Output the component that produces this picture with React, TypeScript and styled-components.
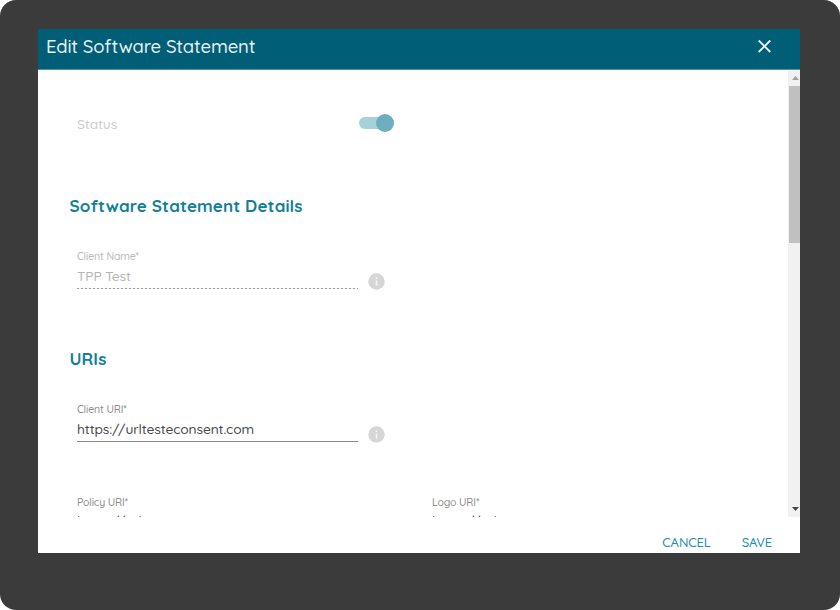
import React from "react";
import styled, { createGlobalStyle } from "styled-components";

const GlobalStyle = createGlobalStyle`
  * { box-sizing: border-box; }
  html, body { margin: 0; background: #fff; overflow: hidden; }
  body { font-family: Quicksand, Lato, "Open Sans", sans-serif; }
  button { font: inherit; border: 0; padding: 0; background: none; }
`;

const Backdrop = styled.main`
  width: 840px;
  height: 610px;
  padding: 29px 40px 57px 38px;
  border-radius: 16px;
  background: #3b3b3b;
`;

const Dialog = styled.section`
  display: flex;
  flex-direction: column;
  width: 762px;
  height: 524px;
  background: #fff;
`;

const Header = styled.header`
  display: flex;
  justify-content: space-between;
  flex: 0 0 41px;
  padding: 5px 27px 0 8px;
  background: #005e77;
  border-bottom: 1px solid #5292a2;
`;

const Title = styled.h1`
  margin: 0;
  color: #e7f0f2;
  font-size: 18.5px;
  line-height: 24px;
  font-weight: 500;
  letter-spacing: -0.18px;
  white-space: nowrap;
`;

const CloseButton = styled.button`
  display: flex;
  width: 17px;
  height: 17px;
  margin-top: 4px;
`;

const Viewport = styled.div`
  display: flex;
  flex: 0 0 447px;
  overflow: hidden;
`;

const Form = styled.div`
  flex: 1;
  min-width: 0;
  height: 447px;
  padding: 44px 0 0 31.5px;
  overflow: hidden;
`;

const StatusRow = styled.div`
  display: flex;
  justify-content: space-between;
  width: 324px;
  height: 82px;
  padding-left: 7.5px;
`;

const StatusLabel = styled.span`
  color: #cbcbcb;
  font-size: 13.8px;
  line-height: 20px;
  letter-spacing: -0.14px;
  font-weight: 500;
`;

const Toggle = styled.span`
  display: flex;
  align-items: center;
  justify-content: flex-end;
  width: 35px;
  height: 12px;
  margin-top: 3px;
  border-radius: 6px;
  background: #a8d0d9;
`;

const Knob = styled.span`
  flex: 0 0 18px;
  height: 18px;
  border-radius: 50%;
  background: #6dafbf;
`;

const SectionTitle = styled.h2`
  height: 20px;
  margin: 0 0 33px;
  color: #127f99;
  font-size: 17px;
  line-height: 20px;
  font-weight: 700;
  letter-spacing: 0.1px;
`;

const FieldRow = styled.div<{ $gap: number }>`
  display: flex;
  height: 40px;
  margin-bottom: ${(p) => p.$gap}px;
  padding-left: 7.5px;
`;

const Field = styled.label<{ $disabled?: boolean }>`
  display: flex;
  flex-direction: column;
  flex: 0 0 281px;
  height: 40px;
  background: ${(p) =>
    p.$disabled
      ? "repeating-linear-gradient(90deg, #a0a0a0 0 2.4px, #f0f0f0 2.4px 4px) bottom / 100% 1px no-repeat"
      : "linear-gradient(#898989, #898989) bottom / 100% 1px no-repeat"};
  color: ${(p) => (p.$disabled ? "#b4b4b4" : "#484848")};
`;

const FieldLabel = styled.span<{ $disabled?: boolean }>`
  height: 14px;
  color: ${(p) => (p.$disabled ? "#b8b8b8" : "#8c8c8c")};
  font-size: 10.5px;
  line-height: 14px;
  font-weight: 500;
  letter-spacing: -0.15px;
`;

const FieldValue = styled.span<{ $offset: number }>`
  height: 20px;
  margin-top: ${(p) => p.$offset}px;
  font-size: 13.8px;
  line-height: 20px;
  font-weight: 500;
  letter-spacing: -0.14px;
`;

const InfoMark = styled.svg`
  width: 17px;
  height: 17px;
  margin: 24px 0 0 9.5px;
`;

const SplitRow = styled.div`
  display: grid;
  grid-template-columns: 281px 281px;
  column-gap: 74px;
  padding-left: 7.5px;
`;

const Scrollbar = styled.div`
  display: flex;
  flex-direction: column;
  justify-content: space-between;
  flex: 0 0 12px;
  height: 447px;
  background: #f1f1f1;
`;

const Arrow = styled.svg`
  width: 7px;
  height: 4px;
  margin: 6px 0 6px 4px;
`;

const Thumb = styled.div`
  flex: 0 0 157px;
  margin: 0 0 auto 1px;
  background: #c0c0c0;
`;

const Footer = styled.footer`
  display: flex;
  justify-content: flex-end;
  gap: 31px;
  flex: 1;
  padding: 16px 28px 0 0;
`;

const Action = styled.button`
  height: 18px;
  color: #228fa9;
  font-size: 13px;
  line-height: 18px;
  font-weight: 500;
  letter-spacing: -0.12px;
`;

const Info = () => (
  <InfoMark viewBox="0 0 17 17">
    <circle cx="8.5" cy="8.5" r="8.2" fill="#d6d6d7" />
    <path d="M8.5 4.2v1.8M8.5 7.4v5.1" stroke="#f6f6f6" strokeWidth="1.6" />
  </InfoMark>
);

type TextFieldProps = { label: string; value: string; disabled?: boolean; offset?: number };

const TextField = ({ label, value, disabled, offset = 3 }: TextFieldProps) => (
  <Field $disabled={disabled}>
    <FieldLabel $disabled={disabled}>{label}</FieldLabel>
    <FieldValue $offset={offset}>{value}</FieldValue>
  </Field>
);

const uri = "https://urltesteconsent.com";

export default function App() {
  return (
    <>
      <GlobalStyle />
      <Backdrop>
        <Dialog>
          <Header>
            <Title>Edit Software Statement</Title>
            <CloseButton aria-label="Close">
              <svg width="17" height="17" viewBox="0 0 17 17">
                <path d="M2.7 2.5 14.3 14M14.3 2.5 2.7 14" stroke="#e7f0f2" strokeWidth="1.9" />
              </svg>
            </CloseButton>
          </Header>
          <Viewport>
            <Form>
              <StatusRow>
                <StatusLabel>Status</StatusLabel>
                <Toggle><Knob /></Toggle>
              </StatusRow>
              <SectionTitle>Software Statement Details</SectionTitle>
              <FieldRow $gap={60}>
                <TextField label="Client Name*" value="TPP Test" disabled />
                <Info />
              </FieldRow>
              <SectionTitle>URIs</SectionTitle>
              <FieldRow $gap={53}>
                <TextField label="Client URI*" value={uri} />
                <Info />
              </FieldRow>
              <SplitRow>
                <TextField label="Policy URI*" value={uri} offset={2} />
                <TextField label="Logo URI*" value={uri} offset={2} />
              </SplitRow>
            </Form>
            <Scrollbar>
              <Arrow viewBox="0 0 7 4"><path d="M0 4 3.5 0 7 4Z" fill="#a0a0a0" /></Arrow>
              <Thumb />
              <Arrow viewBox="0 0 7 4"><path d="M0 0h7L3.5 4Z" fill="#484848" /></Arrow>
            </Scrollbar>
          </Viewport>
          <Footer>
            <Action>CANCEL</Action>
            <Action>SAVE</Action>
          </Footer>
        </Dialog>
      </Backdrop>
    </>
  );
}
